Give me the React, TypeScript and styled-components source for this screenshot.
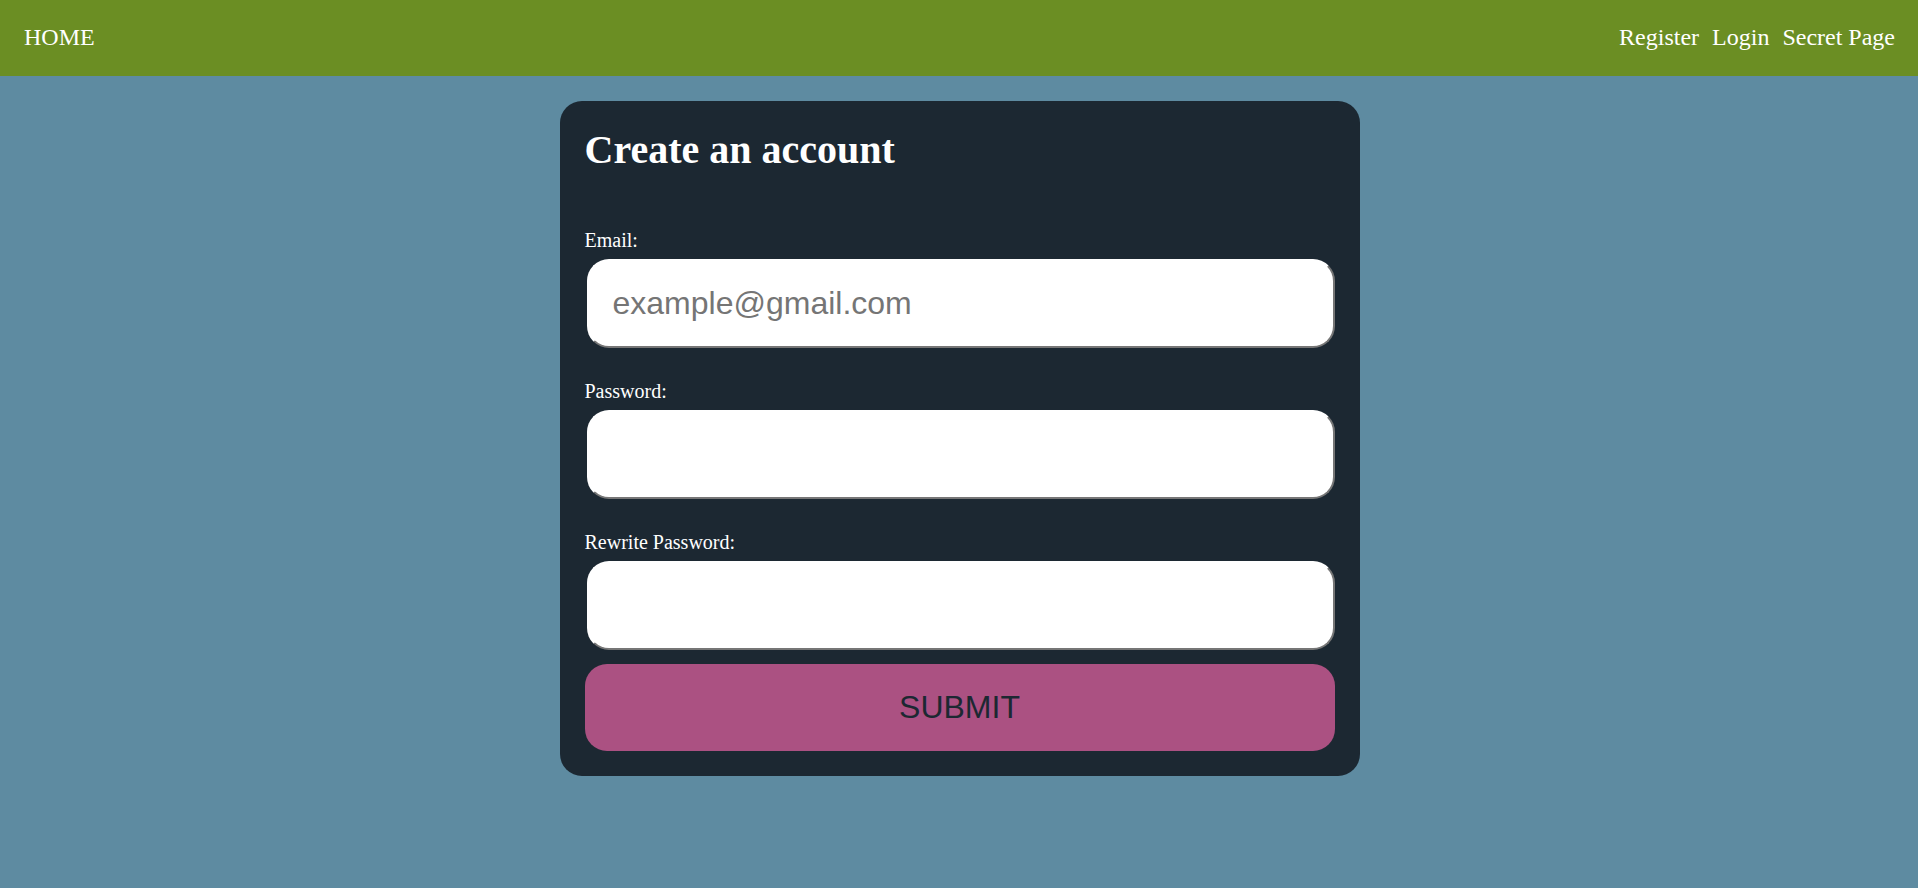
import styled, { createGlobalStyle } from 'styled-components'

const GlobalStyle = createGlobalStyle`
  html, body {
    margin: 0;
    padding: 0;
    background: #5e8ba1;
    font-family: "Liberation Serif", "Times New Roman", serif;
  }
`

const Page = styled.div`
  min-height: 888px;
  background: #5e8ba1;
`

const NavBar = styled.nav`
  height: 76px;
  box-sizing: border-box;
  padding: 0 23px 3px 24px;
  background: #6b8e23;
  display: flex;
  align-items: center;
  justify-content: space-between;
`

const NavLinks = styled.div`
  display: flex;
  gap: 13px;
`

const NavLink = styled.a`
  color: #ffffff;
  font-size: 24px;
  line-height: 28px;
  text-decoration: none;
  cursor: pointer;
`

const Main = styled.main`
  display: flex;
  justify-content: center;
  padding: 25px 0 0 1px;
`

const Card = styled.form`
  width: 800px;
  box-sizing: border-box;
  padding: 25px;
  background: #1c2832;
  border-radius: 22px;
  display: flex;
  flex-direction: column;
`

const Title = styled.h1`
  margin: 1px 0 56px;
  color: #ffffff;
  font-size: 40px;
  line-height: 46px;
  font-weight: bold;
`

const Field = styled.div<{ $last?: boolean }>`
  display: flex;
  flex-direction: column;
  margin-bottom: ${(p) => (p.$last ? '14px' : '32px')};
`

const Label = styled.label`
  color: #ffffff;
  font-size: 20px;
  line-height: 23px;
  margin-bottom: 7px;
`

const TextInput = styled.input`
  box-sizing: border-box;
  width: calc(100% - 2px);
  height: 89px;
  margin: 0 0 0 2px;
  padding: 0 24px;
  border: 2px solid;
  border-color: #ffffff #767676 #767676 #ffffff;
  border-radius: 22px;
  background: #ffffff;
  font-family: "Liberation Sans", Arial, sans-serif;
  font-size: 32px;
  color: #222;
  outline: none;

  &::placeholder {
    color: #757575;
  }
`

const SubmitButton = styled.button`
  box-sizing: border-box;
  width: 100%;
  height: 87px;
  border: none;
  border-radius: 22px;
  background: #ab5182;
  color: #1c2832;
  font-family: "Liberation Sans", Arial, sans-serif;
  font-size: 32px;
  cursor: pointer;
`

export default function App() {
  return (
    <Page>
      <GlobalStyle />
      <NavBar>
        <NavLink>HOME</NavLink>
        <NavLinks>
          <NavLink>Register</NavLink>
          <NavLink>Login</NavLink>
          <NavLink>Secret Page</NavLink>
        </NavLinks>
      </NavBar>
      <Main>
        <Card onSubmit={(e) => e.preventDefault()}>
          <Title>Create an account</Title>
          <Field>
            <Label htmlFor="email">Email:</Label>
            <TextInput id="email" type="email" placeholder="example@gmail.com" />
          </Field>
          <Field>
            <Label htmlFor="password">Password:</Label>
            <TextInput id="password" type="password" />
          </Field>
          <Field $last>
            <Label htmlFor="password2">Rewrite Password:</Label>
            <TextInput id="password2" type="password" />
          </Field>
          <SubmitButton type="submit">SUBMIT</SubmitButton>
        </Card>
      </Main>
    </Page>
  )
}
